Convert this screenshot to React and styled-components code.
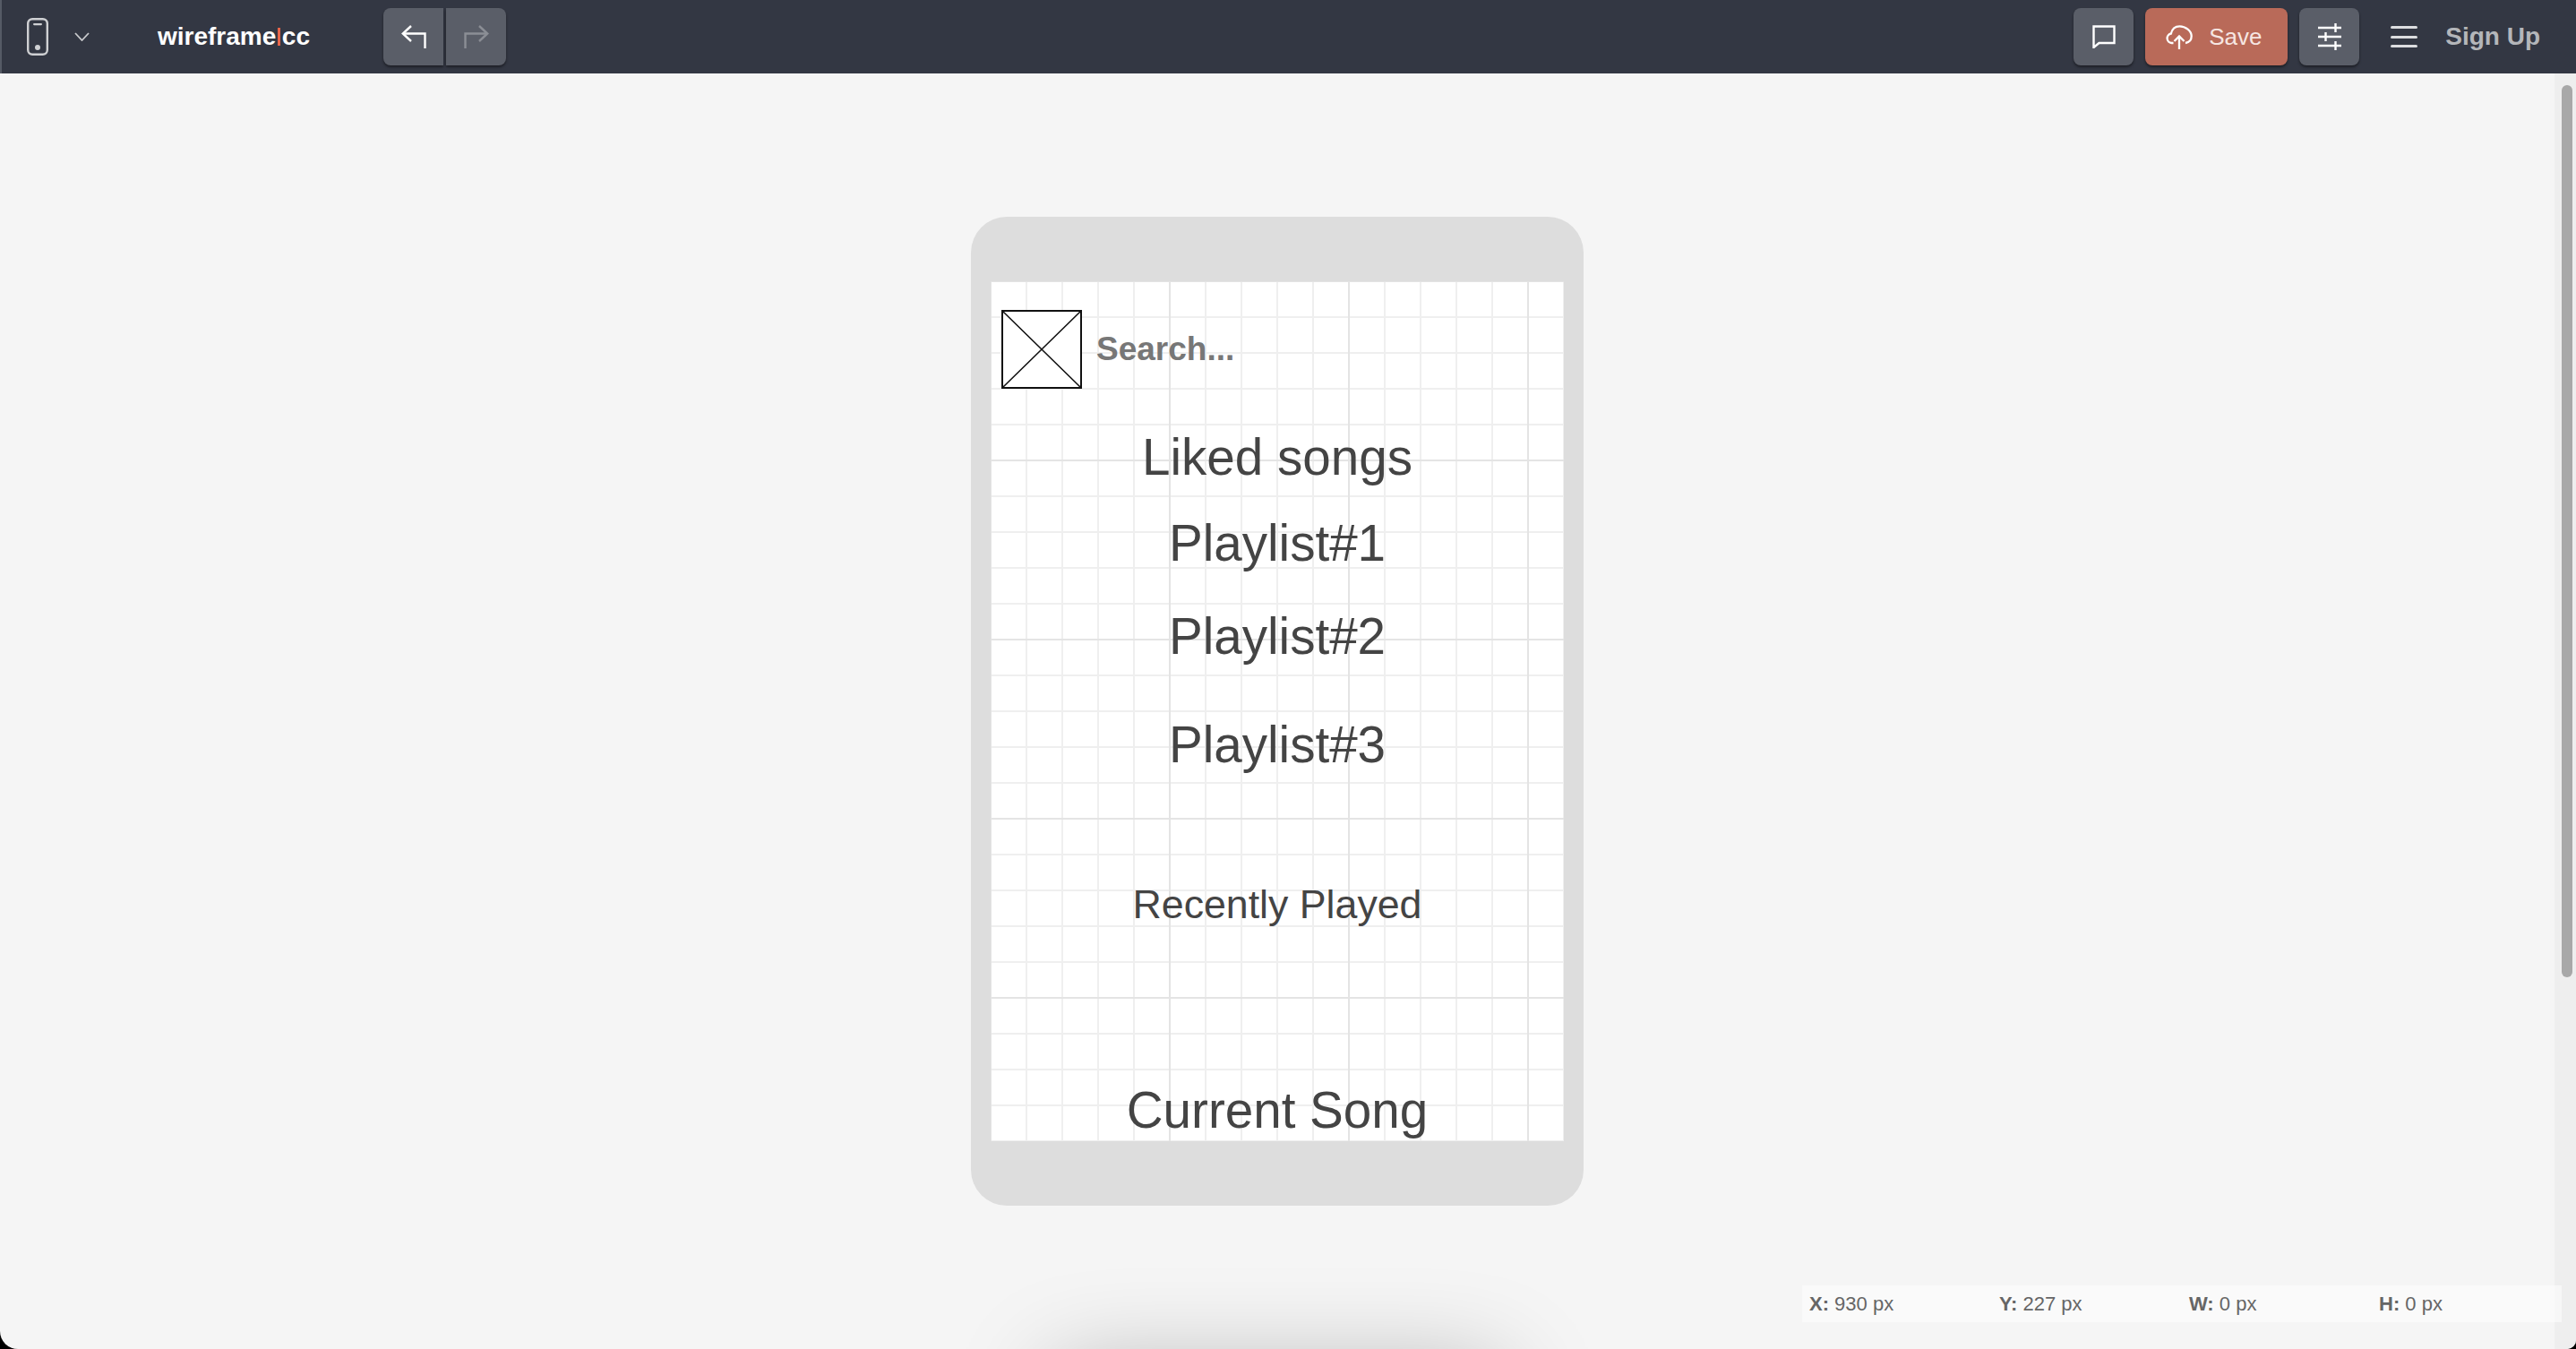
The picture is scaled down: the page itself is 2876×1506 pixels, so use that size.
import React from "react";
import styled, { createGlobalStyle } from "styled-components";

const GlobalStyle = createGlobalStyle`
  html, body {
    margin: 0;
    padding: 0;
    height: 100%;
    overflow: hidden;
    background: #000;
  }
  #root {
    height: 100%;
  }
`;

const Toolbar = () => (
  <TopBar>
    <DeviceIcon />
    <Chevron />
    <Logo>
      wireframe<LogoBar />cc
    </Logo>
    <History>
      <IconButton>
        <UndoIcon color="#fff" />
      </IconButton>
      <IconButton>
        <RedoIcon color="#8b8e95" />
      </IconButton>
    </History>
    <Spacer />
    <IconButton>
      <CommentIcon />
    </IconButton>
    <SaveButton>
      <CloudIcon />
      Save
    </SaveButton>
    <IconButton>
      <SlidersIcon />
    </IconButton>
    <MenuLines>
      <span />
      <span />
      <span />
    </MenuLines>
    <SignUp>Sign Up</SignUp>
  </TopBar>
);

const DeviceIcon = () => (
  <Icon width="24" height="42" viewBox="0 0 24 42" $left={28}>
    <rect x="1.2" y="1.2" width="21.6" height="39.6" rx="5" fill="none" stroke="#cfd0d3" strokeWidth="2.4" />
    <rect x="7" y="6" width="10" height="2.2" rx="1.1" fill="#cfd0d3" />
    <circle cx="12" cy="33" r="3" fill="#cfd0d3" />
  </Icon>
);

const Chevron = () => (
  <Icon width="17" height="10" viewBox="0 0 17 10" $left={29}>
    <path d="M1 1l7.500 8L16 1" fill="none" stroke="#c9cacd" strokeWidth="1.800" />
  </Icon>
);

const UndoIcon = ({ color }) => (
  <svg width="28" height="26" viewBox="0 0 28 26" fill="none" stroke={color} strokeWidth="2.4">
    <path d="M11 1 1.800 9.500l9.200 8.500" />
    <path d="M2 9.500h24.500V26" />
  </svg>
);

const RedoIcon = ({ color }) => (
  <svg width="28" height="26" viewBox="0 0 28 26" fill="none" stroke={color} strokeWidth="2.4">
    <path d="M17 1l9.200 8.500L17 18" />
    <path d="M26 9.500H1.500V26" />
  </svg>
);

const CommentIcon = () => (
  <svg width="26" height="26" viewBox="0 0 26 26" fill="none" stroke="#fff" strokeWidth="2.4">
    <path d="M1.500 1.500h23v18.500H7.500l-6 5z" />
  </svg>
);

const CloudIcon = () => (
  <svg width="30" height="27" viewBox="0 0 30 27" fill="none" stroke="#fff" strokeWidth="2.3">
    <path d="M8.500 20H6.500a5.300 5.300 0 0 1-.6-10.500C7 4.500 10.500 1.300 15.500 1.300c6.500 0 13.200 5 13.200 11 0 4-2.500 7-6.700 7.700" />
    <path d="M15 27V12.500" />
    <path d="m9.500 18 5.500-5.500 5.500 5.500" />
  </svg>
);

const SlidersIcon = () => (
  <svg width="26" height="30" viewBox="0 0 26 30" fill="none" stroke="#fff" strokeWidth="2.4">
    <path d="M0 5h26M0 15h26M0 25h26" />
    <path d="M19.500 0v10M8.500 10v10M19.500 20v10" />
  </svg>
);

const PlaceholderImage = () => (
  <ImageBox viewBox="0 0 90 88" preserveAspectRatio="none">
    <rect x="1" y="1" width="88" height="86" fill="#fff" stroke="#111" strokeWidth="2" />
    <path d="M1 1 89 87M89 1 1 87" stroke="#111" strokeWidth="1.6" />
  </ImageBox>
);

const App = () => (
  <>
    <GlobalStyle />
    <Window>
      <Toolbar />
      <Workspace>
        <Stage>
          <Phone>
            <Screen>
              <SearchRow>
                <PlaceholderImage />
                <SearchText>Search...</SearchText>
              </SearchRow>
              <Heading $top={45} $size={56.6}>Liked songs</Heading>
              <Heading $top={32} $size={56.6}>Playlist#1</Heading>
              <Heading $top={40} $size={56.6}>Playlist#2</Heading>
              <Heading $top={57} $size={56.6}>Playlist#3</Heading>
              <Heading $top={114} $size={44.7}>Recently Played</Heading>
              <Heading $top={166} $size={56.6}>Current Song</Heading>
            </Screen>
          </Phone>
          <NextShadow />
        </Stage>
        <ScrollTrack>
          <ScrollThumb />
        </ScrollTrack>
        <StatusBar>
          <Stat><b>X:</b> 930 px</Stat>
          <Stat><b>Y:</b> 227 px</Stat>
          <Stat><b>W:</b> 0 px</Stat>
          <Stat><b>H:</b> 0 px</Stat>
        </StatusBar>
      </Workspace>
    </Window>
  </>
);

const Window = styled.div`
  height: 100%;
  display: flex;
  flex-direction: column;
  overflow: hidden;
  border-radius: 0 0 10px 20px;
  background: #f5f5f5;
  font-family: "Liberation Sans", Arial, sans-serif;
`;

const TopBar = styled.header`
  flex: 0 0 82px;
  display: flex;
  align-items: center;
  box-sizing: border-box;
  padding: 0 40px 0 0;
  border-left: 2px solid #555a65;
  background: #333743;
`;

const Icon = styled.svg`
  flex: none;
  margin-left: ${(p) => p.$left}px;
`;

const Logo = styled.div`
  display: flex;
  align-items: center;
  margin-left: 76px;
  width: 170px;
  color: #fff;
  font-size: 28px;
  font-weight: 700;
`;

const LogoBar = styled.span`
  width: 4px;
  height: 20px;
  margin: 0 1.5px;
  background: #e8654a;
`;

const History = styled.div`
  display: flex;
  gap: 3px;
  margin-left: 82px;
  & > button:first-child {
    border-radius: 8px 0 0 8px;
  }
  & > button:last-child {
    border-radius: 0 8px 8px 0;
  }
`;

const Spacer = styled.div`
  flex: 1;
`;

const IconButton = styled.button`
  flex: none;
  width: 67px;
  height: 64px;
  display: flex;
  align-items: center;
  justify-content: center;
  padding: 0;
  border: 0;
  border-radius: 8px;
  background: #5a5e68;
  box-shadow: 0 2px 3px rgba(0, 0, 0, 0.45);
`;

const SaveButton = styled.button`
  flex: none;
  width: 159px;
  height: 64px;
  margin: 0 13px;
  display: flex;
  align-items: center;
  gap: 18px;
  padding: 0 0 0 23px;
  border: 0;
  border-radius: 8px;
  background: #b96a59;
  box-shadow: 0 2px 3px rgba(0, 0, 0, 0.45);
  color: #f6e6e2;
  font-family: inherit;
  font-size: 26px;
`;

const MenuLines = styled.div`
  width: 30px;
  height: 24px;
  margin-left: 35px;
  display: flex;
  flex-direction: column;
  justify-content: space-between;
  & > span {
    height: 3px;
    border-radius: 2px;
    background: #dcdde0;
  }
`;

const SignUp = styled.div`
  margin-left: 31px;
  color: #b4b6ba;
  font-size: 28px;
  font-weight: 700;
`;

const Workspace = styled.main`
  position: relative;
  flex: 1;
  min-height: 0;
  display: flex;
`;

const Stage = styled.div`
  position: relative;
  flex: 1;
  overflow: hidden;
  display: flex;
  justify-content: center;
  padding-top: 160px;
`;

const Phone = styled.div`
  width: 640px;
  height: 960px;
  padding: 72px 22px;
  border-radius: 40px;
  background: #dddddd;
`;

const Screen = styled.div`
  width: 640px;
  height: 960px;
  overflow: hidden;
  display: flex;
  flex-direction: column;
  background-color: #fff;
  background-image:
    linear-gradient(to right, #e4e4e4 2px, transparent 2px),
    linear-gradient(to bottom, #e4e4e4 2px, transparent 2px),
    linear-gradient(to right, #efefef 2px, transparent 2px),
    linear-gradient(to bottom, #efefef 2px, transparent 2px);
  background-size: 200px 200px, 200px 200px, 40px 40px, 40px 40px;
  background-position: -1px -1px, -1px -1px, -1px -1px, -1px -1px;
`;

const SearchRow = styled.div`
  display: flex;
  align-items: center;
  gap: 16px;
  padding: 32px 0 0 12px;
`;

const ImageBox = styled.svg`
  flex: none;
  width: 90px;
  height: 88px;
  display: block;
`;

const SearchText = styled.div`
  color: #777;
  font-size: 37px;
  font-weight: 700;
`;

const Heading = styled.div`
  margin-top: ${(p) => p.$top}px;
  color: #444;
  font-size: ${(p) => p.$size}px;
  line-height: 64px;
  text-align: center;
`;

const NextShadow = styled.div`
  position: absolute;
  left: 1176px;
  top: 1448px;
  width: 500px;
  height: 200px;
  box-shadow: 0 0 110px rgba(0, 0, 0, 0.28);
`;

const StatusBar = styled.div`
  position: absolute;
  left: 2012px;
  top: 1353px;
  width: 848px;
  height: 41px;
  box-sizing: border-box;
  padding-left: 8px;
  display: grid;
  grid-template-columns: repeat(4, 212px);
  align-items: center;
  background: rgba(255, 255, 255, 0.5);
  color: #666;
  font-size: 22px;
`;

const Stat = styled.div`
  white-space: nowrap;
`;

const ScrollTrack = styled.div`
  flex: 0 0 24px;
  box-sizing: border-box;
  padding: 13px 4px 0 8px;
  background: #eeeeee;
`;

const ScrollThumb = styled.div`
  height: 996px;
  border-radius: 6px;
  background: #a8a8a8;
`;

export default App;
